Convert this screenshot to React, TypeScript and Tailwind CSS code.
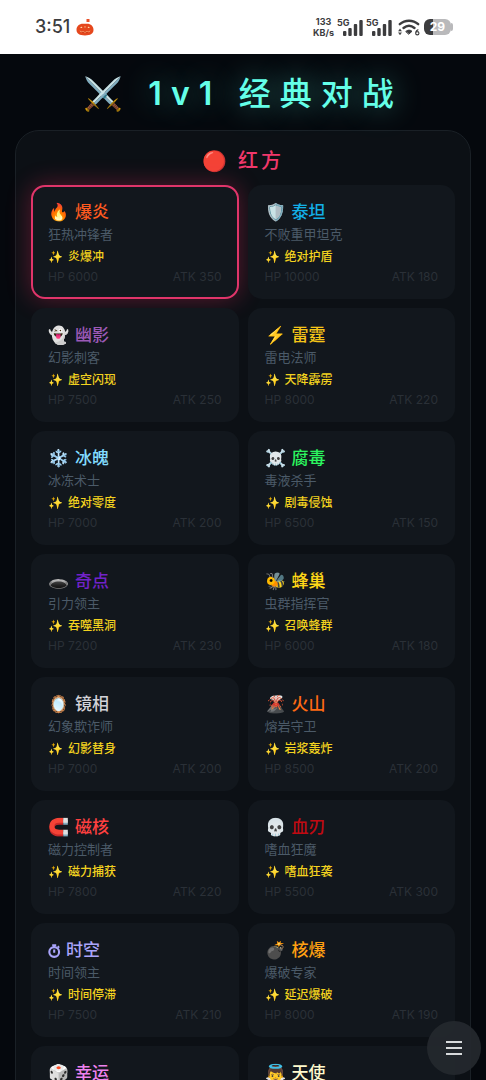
import { useState } from "react";

type Hero = {
  icon: string;
  name: string;
  color: string;
  role?: string;
  skill?: string;
  hp?: number;
  atk?: number;
};

const heroes: Hero[] = [
  { icon: "🔥", name: "爆炎", color: "text-[#ff5a1f]", role: "狂热冲锋者", skill: "炎爆冲", hp: 6000, atk: 350 },
  { icon: "🛡️", name: "泰坦", color: "text-[#12b0e8]", role: "不败重甲坦克", skill: "绝对护盾", hp: 10000, atk: 180 },
  { icon: "👻", name: "幽影", color: "text-[#9b59b6]", role: "幻影刺客", skill: "虚空闪现", hp: 7500, atk: 250 },
  { icon: "⚡", name: "雷霆", color: "text-[#f5c518]", role: "雷电法师", skill: "天降霹雳", hp: 8000, atk: 220 },
  { icon: "❄️", name: "冰魄", color: "text-[#81dcff]", role: "冰冻术士", skill: "绝对零度", hp: 7000, atk: 200 },
  { icon: "☠️", name: "腐毒", color: "text-[#2bf55f]", role: "毒液杀手", skill: "剧毒侵蚀", hp: 6500, atk: 150 },
  { icon: "🕳️", name: "奇点", color: "text-[#7122c9]", role: "引力领主", skill: "吞噬黑洞", hp: 7200, atk: 230 },
  { icon: "🐝", name: "蜂巢", color: "text-[#ffd817]", role: "虫群指挥官", skill: "召唤蜂群", hp: 6000, atk: 180 },
  { icon: "🪞", name: "镜相", color: "text-[#d2d2d8]", role: "幻象欺诈师", skill: "幻影替身", hp: 7000, atk: 200 },
  { icon: "🌋", name: "火山", color: "text-[#ff6a13]", role: "熔岩守卫", skill: "岩浆轰炸", hp: 8500, atk: 200 },
  { icon: "🧲", name: "磁核", color: "text-[#ff4040]", role: "磁力控制者", skill: "磁力捕获", hp: 7800, atk: 220 },
  { icon: "💀", name: "血刃", color: "text-[#c00a12]", role: "嗜血狂魔", skill: "嗜血狂袭", hp: 5500, atk: 300 },
  { icon: "⏱", name: "时空", color: "text-[#a9a4fa]", role: "时间领主", skill: "时间停滞", hp: 7500, atk: 210 },
  { icon: "💣", name: "核爆", color: "text-[#ffa012]", role: "爆破专家", skill: "延迟爆破", hp: 8000, atk: 190 },
  { icon: "🎲", name: "幸运", color: "text-[#ee82ee]" },
  { icon: "👼", name: "天使", color: "text-[#fffacd]" },
];

function HeroIcon({ icon }: { icon: string }) {
  if (icon === "⏱") {
    return (
      <svg viewBox="0 0 14 14" className="size-[14px]" fill="none" stroke="currentColor" strokeWidth="2.1" aria-hidden="true">
        <circle cx="6.2" cy="8" r="4.9" />
        <path d="M4.200 1.200h4M6.200 1v2.500M6.200 5.500v3.200M9.800 3.400l1.400-1" />
      </svg>
    );
  }
  return <span className="w-[23px]">{icon}</span>;
}

function HeroCard({ hero, selected, onSelect }: { hero: Hero; selected: boolean; onSelect: () => void }) {
  return (
    <button
      type="button"
      onClick={onSelect}
      aria-pressed={selected}
      className={`flex min-h-[114px] min-w-0 flex-col rounded-[14px] border-2 bg-[#12171d] px-[15px] pt-[15px] pb-[10px] text-left ${
        selected ? "border-[#e0356a] shadow-[0_0_24px_rgba(255,45,95,0.32)]" : "border-transparent"
      }`}
    >
      <span className={`flex h-[22px] items-center gap-1 text-[17px] font-medium whitespace-nowrap ${hero.color}`}>
        <HeroIcon icon={hero.icon} />
        <span>{hero.name}</span>
      </span>
      {hero.role && (
        <>
          <span className="text-[13px] leading-5 text-[#4b5a68]">{hero.role}</span>
          <span className="flex gap-[5px] text-xs leading-[26px] font-medium text-[#f2d21f]">
            <span>✨</span>
            <span>{hero.skill}</span>
          </span>
          <span className="flex w-full justify-between text-xs leading-[14px] text-[#2a3037]">
            <span>HP {hero.hp}</span>
            <span>ATK {hero.atk}</span>
          </span>
        </>
      )}
    </button>
  );
}

function Signal() {
  return (
    <span className="relative flex h-[18px] w-[26px] items-end justify-end">
      <span className="absolute top-0 left-0 text-[9px] leading-[9px] font-bold">5G</span>
      <svg viewBox="0 0 20 16" className="h-4 w-5" fill="currentColor" aria-hidden="true">
        <rect x="0" y="11" width="3.4" height="5" rx="1" />
        <rect x="5.3" y="8" width="3.4" height="8" rx="1" />
        <rect x="10.8" y="4" width="3.4" height="12" rx="1" />
        <rect x="16.3" y="0" width="3.4" height="16" rx="1" />
      </svg>
    </span>
  );
}

function StatusBar() {
  return (
    <header className="flex h-[54px] shrink-0 items-center justify-between bg-white pr-[33px] pl-[35px] text-[#3c3c3e]">
      <div className="flex items-center gap-[6px]">
        <time className="text-lg leading-6 font-medium">3:51</time>
        <svg viewBox="0 0 18 18" className="h-[18px] w-[18px]" aria-hidden="true">
          <path d="M10.5 1h3v3h-3z" fill="#e8512a" />
          <path d="M9 5.8c5.5-.8 8.5 2 8.500 6 0 4-3 5.700-8.500 5.700S.5 15.800.5 11.800c0-4 3-6.800 8.500-6z" fill="#e5471d" />
          <path d="M4 10l1.500-1.500 1 1.500zM8.200 8.500h1.600L9 10zM11.500 10l1-1.500L14 10z" fill="#ffd9a8" />
          <path d="M3.500 12.500c3 1.600 8 1.600 11 0-1.500 3.200-9.500 3.200-11 0z" fill="#ffc08c" />
          <path d="M5.500 13.800l1.500 1 2-1 2 1 1.500-1" stroke="#d23a14" fill="none" />
        </svg>
      </div>
      <div className="flex items-center gap-[3px]">
        <span className="text-center text-[9px] leading-[11px] font-bold">
          133
          <br />
          KB/s
        </span>
        <Signal />
        <Signal />
        <svg viewBox="0 0 22 17" className="ml-[3px] h-[17px] w-[22px]" fill="none" stroke="currentColor" strokeLinecap="round" aria-hidden="true">
          <path d="M1.800 5.200C7 .5 15 .5 20.200 5.200" strokeWidth="2.400" />
          <path d="M5.500 9C9 6 13 6 16.500 9" strokeWidth="2.400" />
          <path d="M8 12.300c2-1.600 4-1.600 6 0L11 15z" fill="currentColor" strokeWidth="1" />
          <path d="M.5 12L2 9.800 3.500 12zM.5 13.800L2 16l1.500-2.200z" fill="currentColor" strokeWidth=".3" />
          <path d="M20 10.800c-2 1-2.500 2.500-2.200 3.800M19.300 12.600a1.600 1.600 0 1 1 0 3.300 1.600 1.600 0 0 1 0-3.300z" strokeWidth="1.100" />
        </svg>
        <span className="ml-px flex items-center">
          <span className="flex h-4 w-[27px] items-center justify-center rounded-[6px] bg-linear-to-r from-[#3c3c3e] from-32% to-[#b9b9bb] to-32% text-[12px] leading-4 font-bold text-white">
            29
          </span>
          <span className="h-2 w-0.5 rounded-r-full bg-[#b9b9bb]" />
        </span>
      </div>
    </header>
  );
}

export default function App() {
  const [selected, setSelected] = useState("爆炎");
  return (
    <div className="relative flex h-screen flex-col overflow-hidden bg-[#05080d] font-['Inter','Noto_Sans_CJK_SC',sans-serif]">
      <StatusBar />
      <main className="min-h-0 flex-1 overflow-y-auto px-[15px] pt-4 [scrollbar-width:none]">
        <h1 className="flex h-12 items-center justify-center gap-4 text-[32px] font-medium whitespace-nowrap text-[#64ffe8]">
          <span className="w-[49px]">⚔️</span>
          <span className="tracking-[9px] [text-shadow:0_0_30px_rgba(100,255,232,0.45)]">
            <span className="font-semibold">1v1</span> 经典对战
          </span>
        </h1>
        <section className="mt-3 rounded-[24px] border border-[#1a2026] bg-[#0c1015] px-[15px] pt-[14px] pb-4">
          <h2 className="flex h-8 items-center justify-center gap-2 text-xl font-medium tracking-[3px] text-[#f0386b]">
            <span>🔴</span>
            <span>红方</span>
          </h2>
          <div className="mt-2 grid grid-cols-2 gap-[9px]">
            {heroes.map((hero) => (
              <HeroCard key={hero.name} hero={hero} selected={hero.name === selected} onSelect={() => setSelected(hero.name)} />
            ))}
          </div>
        </section>
      </main>
      <button
        type="button"
        aria-label="菜单"
        className="absolute right-[5px] bottom-[5px] flex size-[54px] items-center justify-center rounded-full bg-[#24282d]/95 text-[#d8dadc]"
      >
        <svg viewBox="0 0 18 16" className="h-4 w-[18px]" stroke="currentColor" strokeWidth="2" aria-hidden="true">
          <path d="M1 2h16M1 8h16M1 14h16" />
        </svg>
      </button>
    </div>
  );
}
